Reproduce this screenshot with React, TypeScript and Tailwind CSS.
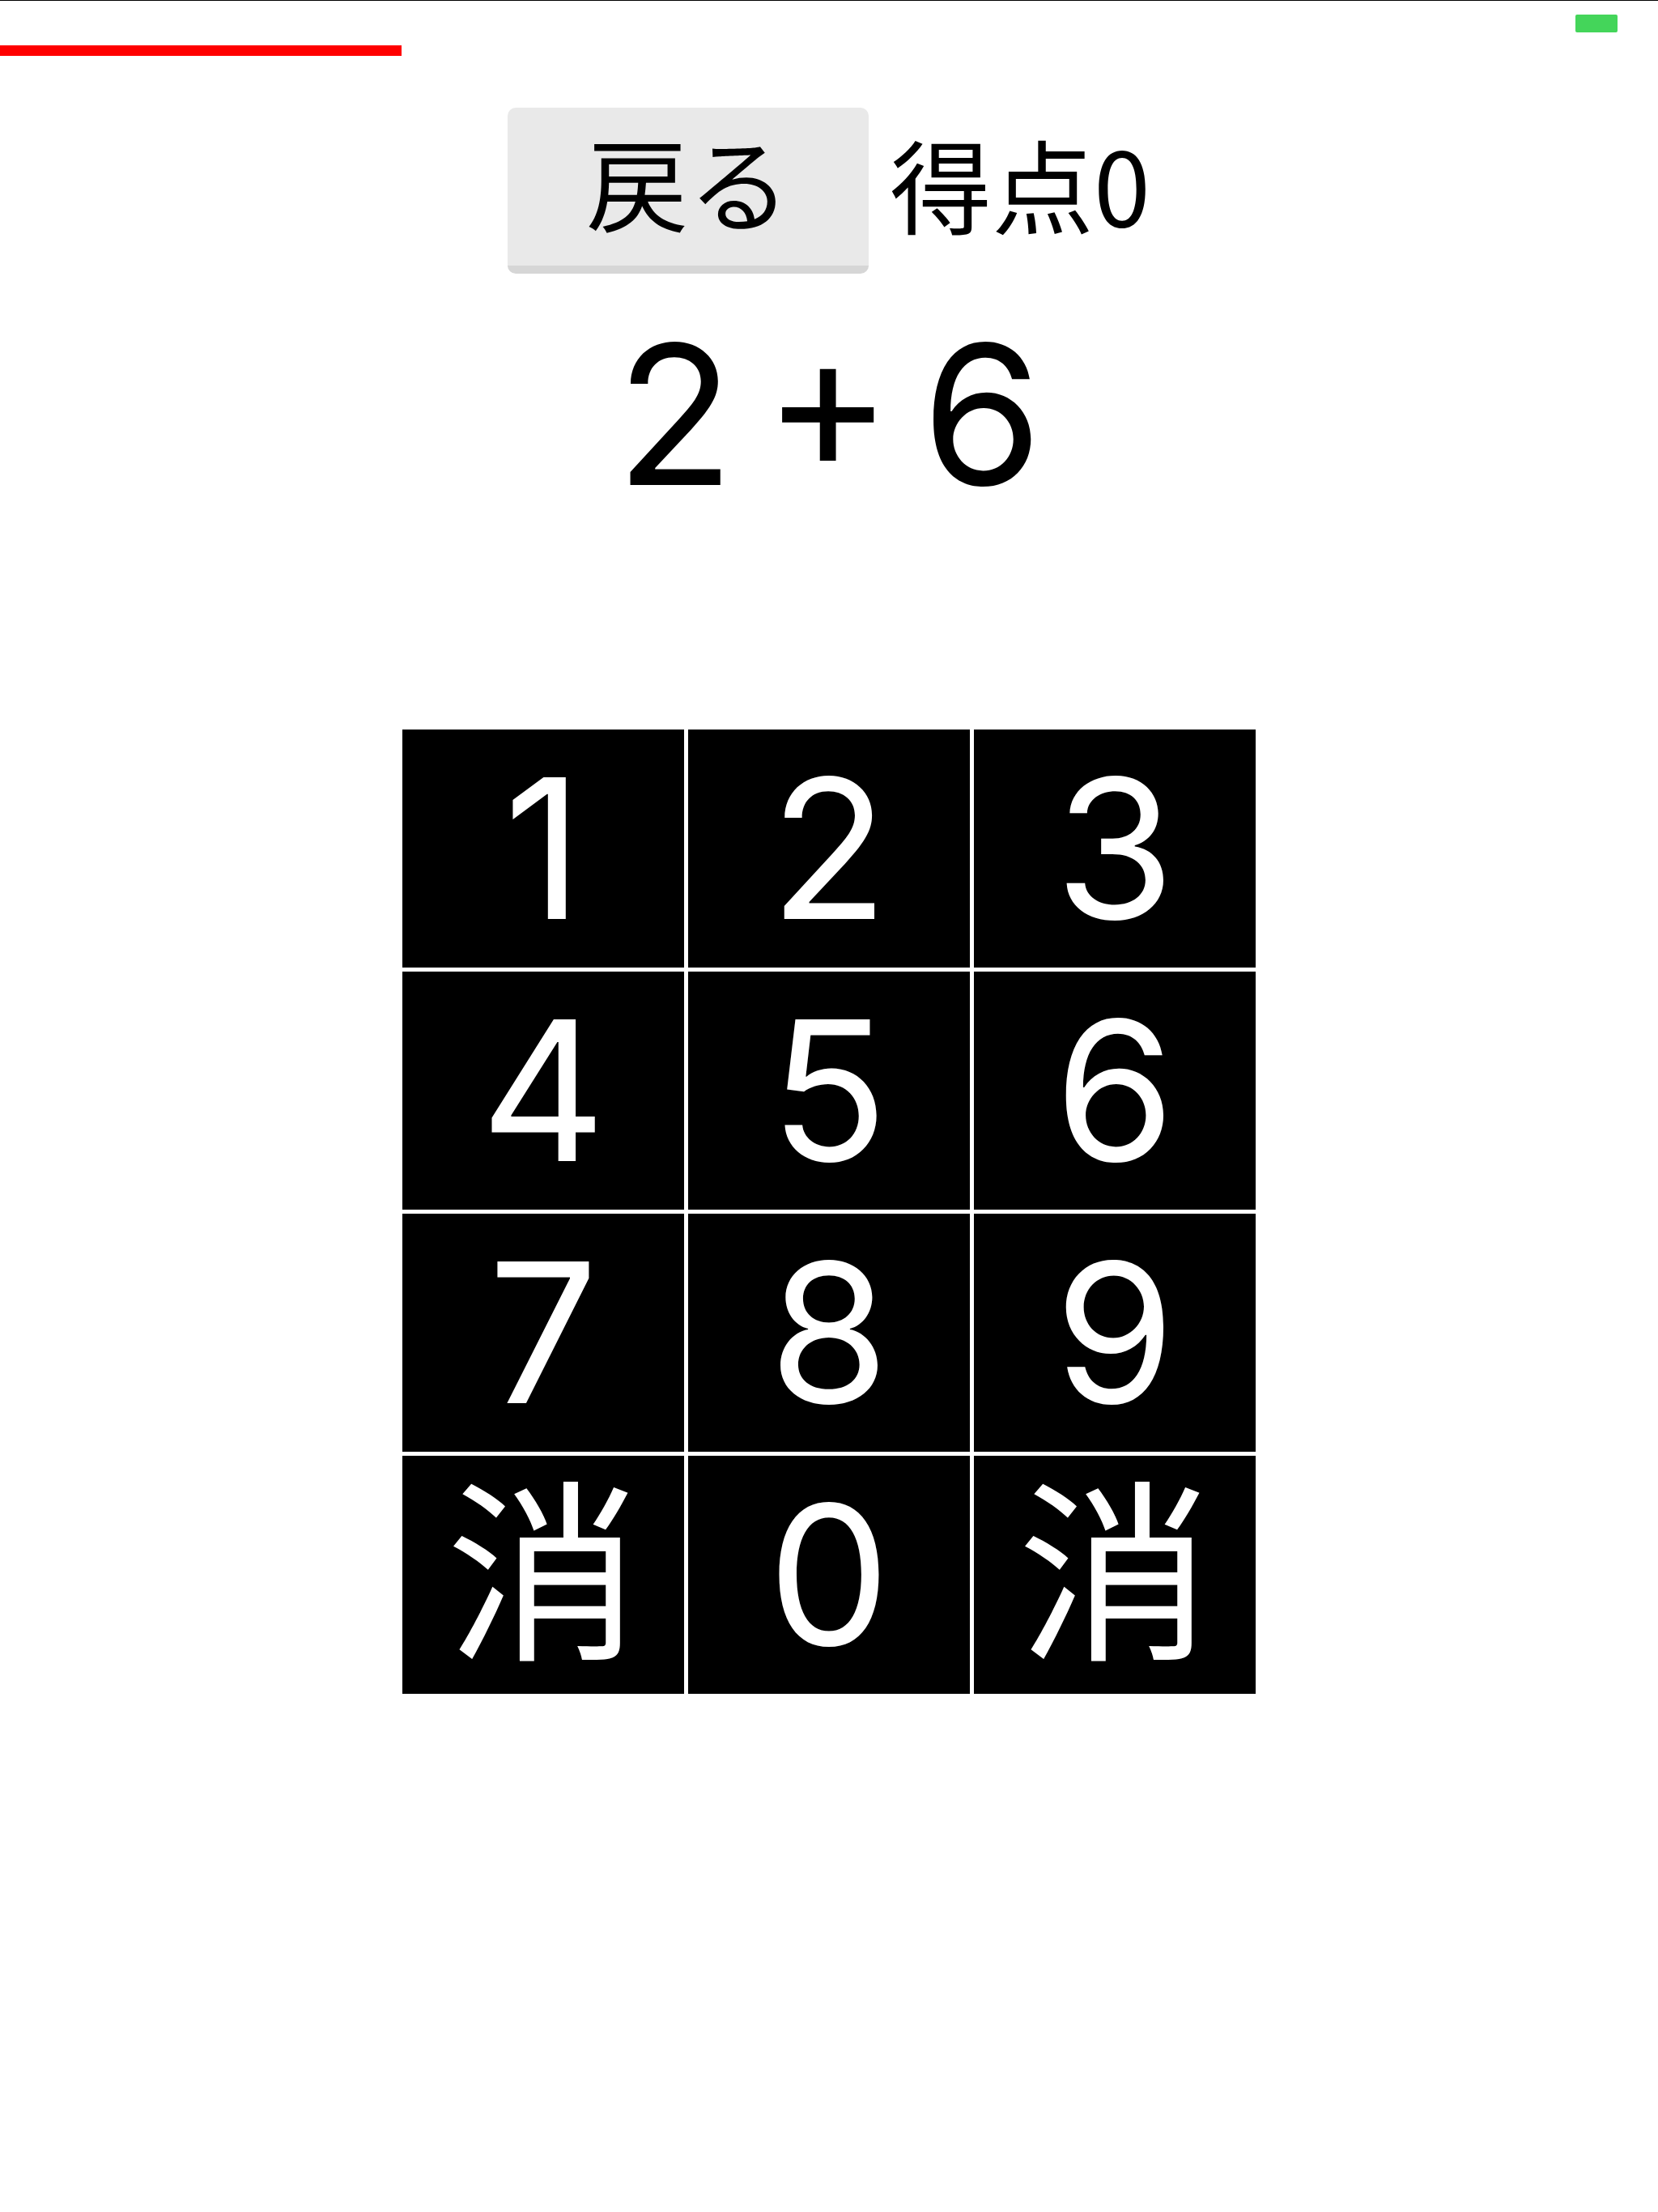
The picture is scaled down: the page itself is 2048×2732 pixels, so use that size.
import React from "react";

const FONT = { fontFamily: 'Inter, "Noto Sans CJK JP", sans-serif' };
const CJK = { fontFamily: '"Noto Sans CJK JP", sans-serif' };

export default function App() {
  const keys = ["1", "2", "3", "4", "5", "6", "7", "8", "9", "消", "0", "消"];
  return (
    <div className="min-h-[2732px] w-[2048px] bg-white text-black" style={FONT}>
      <div className="h-px bg-black" />
      <div className="flex h-[132px] items-start justify-between">
        <div className="mt-[55px] h-[13px] w-[496px] bg-[#ff0000]" />
        <div className="mr-[50px] mt-[17px] h-[22px] w-[52px] rounded-[2px] bg-[#44d55a]" />
      </div>
      <div className="flex items-center justify-center gap-[26px]">
        <button className="flex h-[205px] w-[446px] items-center justify-center rounded-[10px] border-b-[10px] border-[#d6d6d6] bg-[#e9e9e9] text-[126px] leading-none text-black">
          戻る
        </button>
        <span className="mb-[22px] text-[126px] leading-none" style={CJK}>得点0</span>
      </div>
      <div className="mt-[54px] text-center text-[240px] leading-none [word-spacing:-31px]">2 + 6</div>
      <div className="mx-auto mt-[269px] grid w-fit grid-cols-[repeat(3,348px)] grid-rows-[repeat(4,294px)] gap-[5px]">
        {keys.map((k, i) => (
          <div
            key={i}
            className="flex items-center justify-center bg-black text-[240px] leading-none text-white"
          >
            {k}
          </div>
        ))}
      </div>
    </div>
  );
}
